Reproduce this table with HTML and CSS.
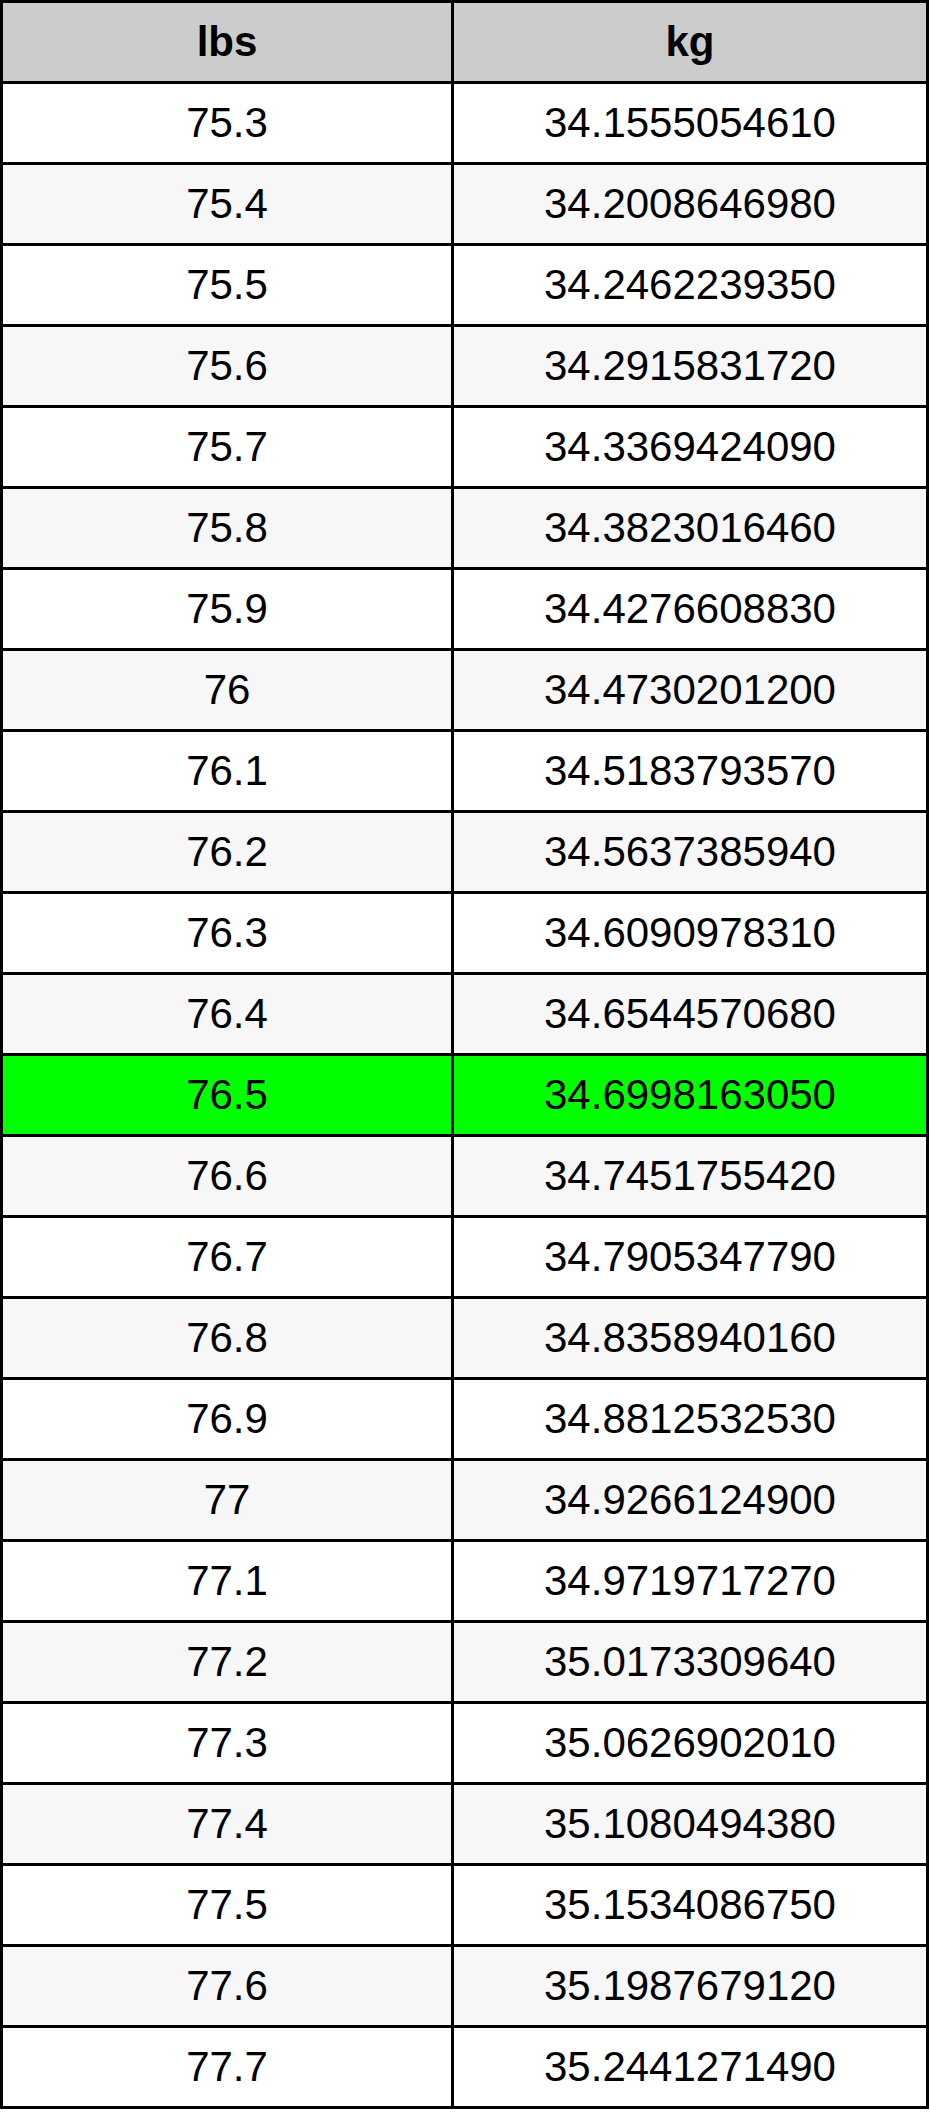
FILE: index.html
```html
<!DOCTYPE html>
<html>
<head>
<meta charset="utf-8">
<title>lbs to kg</title>
<link rel="stylesheet" href="styles.css">
</head>
<body>
<table class="conv">
<thead>
<tr><th class="c1">lbs</th><th class="c2">kg</th></tr>
</thead>
<tbody>
<tr><td>75.3</td><td>34.1555054610</td></tr>
<tr class="alt"><td>75.4</td><td>34.2008646980</td></tr>
<tr><td>75.5</td><td>34.2462239350</td></tr>
<tr class="alt"><td>75.6</td><td>34.2915831720</td></tr>
<tr><td>75.7</td><td>34.3369424090</td></tr>
<tr class="alt"><td>75.8</td><td>34.3823016460</td></tr>
<tr><td>75.9</td><td>34.4276608830</td></tr>
<tr class="alt"><td>76</td><td>34.4730201200</td></tr>
<tr><td>76.1</td><td>34.5183793570</td></tr>
<tr class="alt"><td>76.2</td><td>34.5637385940</td></tr>
<tr><td>76.3</td><td>34.6090978310</td></tr>
<tr class="alt"><td>76.4</td><td>34.6544570680</td></tr>
<tr class="hl"><td>76.5</td><td>34.6998163050</td></tr>
<tr class="alt"><td>76.6</td><td>34.7451755420</td></tr>
<tr><td>76.7</td><td>34.7905347790</td></tr>
<tr class="alt"><td>76.8</td><td>34.8358940160</td></tr>
<tr><td>76.9</td><td>34.8812532530</td></tr>
<tr class="alt"><td>77</td><td>34.9266124900</td></tr>
<tr><td>77.1</td><td>34.9719717270</td></tr>
<tr class="alt"><td>77.2</td><td>35.0173309640</td></tr>
<tr><td>77.3</td><td>35.0626902010</td></tr>
<tr class="alt"><td>77.4</td><td>35.1080494380</td></tr>
<tr><td>77.5</td><td>35.1534086750</td></tr>
<tr class="alt"><td>77.6</td><td>35.1987679120</td></tr>
<tr><td>77.7</td><td>35.2441271490</td></tr>
</tbody>
</table>
</body>
</html>
```

FILE: styles.css
```css
html, body {
  margin: 0;
  padding: 0;
  background: #ffffff;
}

.conv {
  border-collapse: separate;
  border-spacing: 3px;
  background: #000000;
  width: 929px;
  table-layout: fixed;
  font-family: "Liberation Sans", Arial, sans-serif;
  font-size: 42px;
  color: #000000;
}

.conv th,
.conv td {
  height: 78px;
  padding: 0;
  text-align: center;
  vertical-align: middle;
  background: #ffffff;
  line-height: 1;
}

.conv th {
  background: #cccccc;
  font-weight: bold;
}

.conv .c1 {
  width: 448px;
}

.conv .c2 {
  width: 472px;
}

.conv tr.alt td {
  background: #f7f7f7;
}

.conv tr.hl td {
  background: #00ff00;
}
```
